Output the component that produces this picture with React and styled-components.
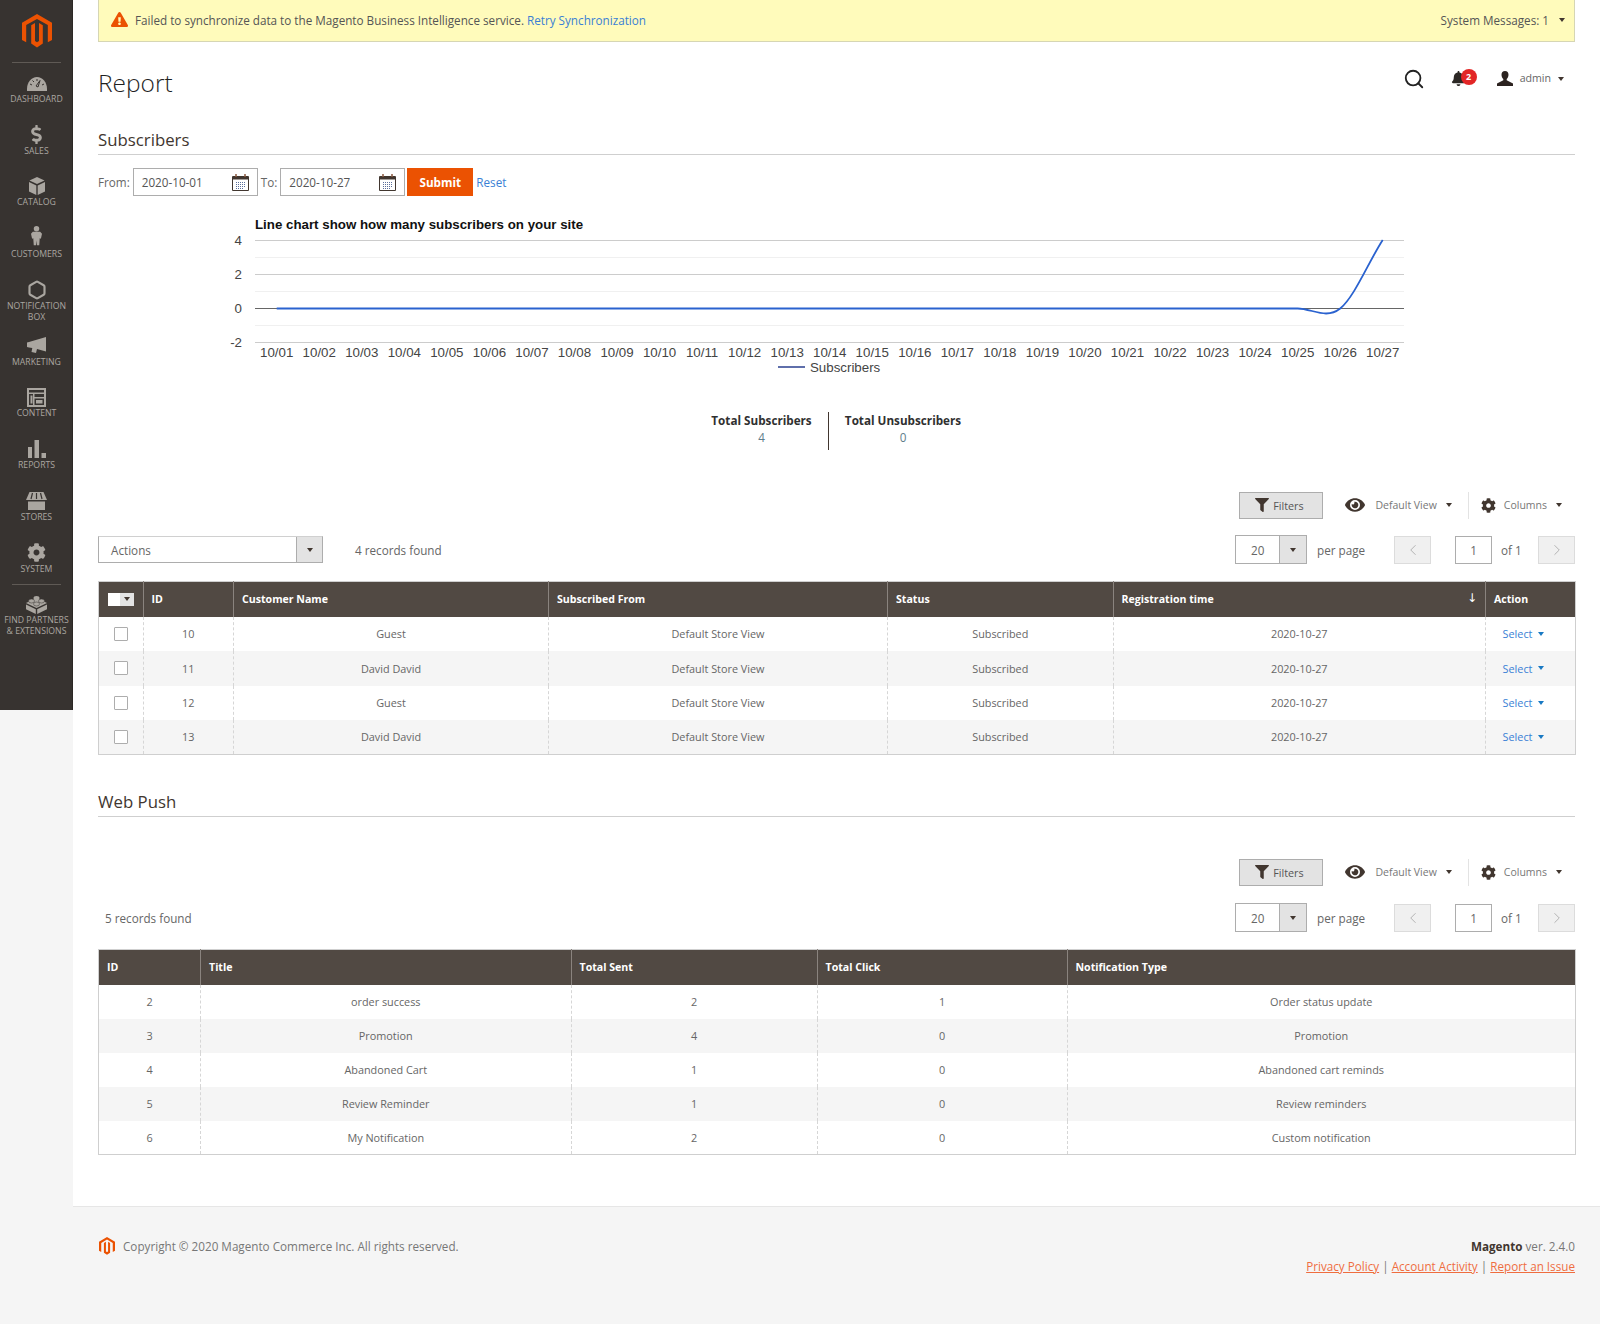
import React from "react";
import styled, { createGlobalStyle } from "styled-components";
import { FaBell, FaCog, FaDollarSign, FaExclamationTriangle, FaEye, FaFilter } from "react-icons/fa";
import { ChevronLeft, ChevronRight, Hexagon, Search } from "lucide-react";

const GlobalStyle = createGlobalStyle`
  html, body { margin: 0; padding: 0; background: #f5f5f5; }
  body { font-family: "Open Sans", "DejaVu Sans", sans-serif; color: #41362f; }
  * { box-sizing: border-box; }
  a { text-decoration: none; }
`;

const Page = styled.div`
  display: flex;
  align-items: flex-start;
  width: 1600px;
  min-height: 1324px;
`;

const Sidebar = styled.nav`
  width: 73px;
  height: 710px;
  flex: none;
  padding-left: 1px;
  background: #373330;
  border-right: 1px solid #2c2825;
`;

const LogoBox = styled.div`
  height: 63px;
  margin: 0 11px 9px;
  padding-top: 14px;
  display: flex;
  justify-content: center;
  border-bottom: 1px solid #5f5a55;
`;

const NavItem = styled.a`
  display: flex;
  flex-direction: column;
  align-items: center;
  height: ${(p) => p.$h || 51.7}px;
  padding-top: ${(p) => p.$top || 0}px;
  color: #aaa6a0;
  font-size: 8.7px;
  line-height: 11px;
  text-align: center;
  text-transform: uppercase;
  white-space: pre-line;
`;

const NavIcon = styled.span`
  height: 22px;
  margin-top: ${(p) => -(p.$up || 0)}px;
  margin-bottom: ${(p) => p.$up || 0}px;
  display: flex;
  align-items: center;
  justify-content: center;
  color: #aaa6a0;
`;

const NavDivider = styled.div`
  height: 1px;
  margin: 0 11px;
  background: #5f5a55;
`;

const Main = styled.div`
  flex: 1;
  min-width: 0;
`;

const Content = styled.main`
  background: #fff;
  height: 1207px;
  padding: 0 25px;
  border-bottom: 1px solid #e6e6e6;
`;

const MessageBar = styled.div`
  height: 42px;
  display: flex;
  align-items: center;
  justify-content: space-between;
  padding: 0 9px 2px 12px;
  background: #fffbbb;
  border: 1px solid #d6d6b4;
  border-top: 0;
  font-size: 11.7px;
  color: #555;
`;

const MessageText = styled.div`
  display: flex;
  align-items: center;
  gap: 7px;
  color: #eb5202;
  & > span { color: #555; }
`;

const SystemMessages = styled.span`
  display: flex;
  align-items: center;
`;

const TextLink = styled.a`
  color: #3a7fd5;
`;

const Caret = styled.span`
  display: inline-block;
  width: 0;
  height: 0;
  margin-left: ${(p) => p.$ml || 0}px;
  border-left: 3.5px solid transparent;
  border-right: 3.5px solid transparent;
  border-top: 4.5px solid ${(p) => p.$color || "#41362f"};
`;

const PageHeader = styled.header`
  height: 83px;
  display: flex;
  align-items: center;
  justify-content: space-between;
  padding-right: 11px;
  padding-bottom: 2px;
`;

const PageTitle = styled.h1`
  margin: 0;
  font-size: 24.5px;
  font-weight: 300;
  color: #1f1f1f;
`;

const HeaderActions = styled.div`
  display: flex;
  align-items: center;
  color: #222;
  padding-bottom: 8px;
`;

const Bell = styled.span`
  position: relative;
  display: flex;
  margin: 0 31px 0 26px;
  color: #2c2825;
`;

const Badge = styled.span`
  position: absolute;
  left: 10px;
  top: -2px;
  width: 16px;
  height: 16px;
  border-radius: 50%;
  background: #e22626;
  color: #fff;
  font-size: 9px;
  font-weight: 700;
  line-height: 16px;
  text-align: center;
`;

const Admin = styled.span`
  margin: 0 0 2px 7px;
  font-size: 10.6px;
  color: #666;
`;

const SectionTitle = styled.h2`
  margin: 0;
  height: 30px;
  padding-top: 3px;
  border-bottom: 1px solid #cfcfcf;
  font-size: 16.8px;
  line-height: 24px;
  font-weight: 400;
  color: #41362f;
`;

const DateForm = styled.form`
  display: flex;
  align-items: center;
  height: 28px;
  margin-top: 13px;
  font-size: 11.7px;
  color: #666;
`;

const DateBox = styled.div`
  width: 125px;
  height: 28px;
  margin: 0 3px;
  padding: 0 8px;
  display: flex;
  align-items: center;
  justify-content: space-between;
  border: 1px solid #adadad;
  background: #fff;
  color: #555;
`;

const SubmitButton = styled.button`
  width: 66px;
  height: 28px;
  margin: 0 3px 0 -1px;
  padding: 0;
  border: 0;
  background: #eb5202;
  color: #fff;
  font: 700 11.7px "Open Sans", sans-serif;
`;

const Chart = styled.svg`
  display: block;
  width: 1600px;
  height: 188px;
  margin: 1px 0 0 -98px;
`;

const Stats = styled.div`
  display: flex;
  justify-content: center;
  margin-top: 27px;
`;

const Stat = styled.div`
  width: ${(p) => p.$w}px;
  height: 38px;
  text-align: center;
  font-size: 11.7px;
  line-height: 17px;
  color: #607d8b;
  border-left: ${(p) => (p.$line ? "1px solid #41362f" : "0")};
  & > strong { display: block; color: #303030; font-weight: 700; }
`;

const FilterRow = styled.div`
  display: flex;
  align-items: center;
  justify-content: flex-end;
  height: 28px;
  margin-top: ${(p) => p.$mt}px;
  padding-right: 13px;
  font-size: 10.5px;
  color: #666;
`;

const FilterButton = styled.button`
  width: 84px;
  height: 27px;
  display: flex;
  align-items: center;
  justify-content: center;
  gap: 4px;
  padding: 0 4px 0 0;
  border: 1px solid #adadad;
  background: #e3e3e3;
  color: #555;
  font: 400 10.8px "Open Sans", sans-serif;
  & > svg { color: #41362f; }
`;

const ViewSwitch = styled.span`
  display: flex;
  align-items: center;
  color: #41362f;
  margin-left: ${(p) => p.$ml}px;
  & > em { margin-left: ${(p) => p.$gap}px; font-style: normal; color: #777; }
`;

const RowDivider = styled.span`
  width: 1px;
  height: 27px;
  margin: 0 12px 0 16px;
  background: #e3e3e3;
`;

const PagerRow = styled.div`
  display: flex;
  align-items: center;
  justify-content: space-between;
  height: 29px;
  margin-top: ${(p) => p.$mt}px;
  font-size: 11.7px;
  color: #666;
`;

const PagerLeft = styled.div`
  display: flex;
  align-items: center;
  padding-left: ${(p) => p.$pad || 0}px;
`;

const ActionsSelect = styled.div`
  width: 225px;
  height: 27px;
  display: flex;
  align-items: center;
  justify-content: space-between;
  margin-right: 32px;
  padding-left: 12px;
  border: 1px solid #adadad;
  border-top-color: #d0d0d0;
  color: #666;
`;

const DropButton = styled.span`
  width: ${(p) => p.$w}px;
  align-self: stretch;
  display: flex;
  align-items: center;
  justify-content: center;
  background: #e3e3e3;
  border-left: 1px solid #adadad;
`;

const PagerRight = styled.div`
  display: flex;
  align-items: center;
`;

const PerPageSelect = styled.div`
  width: 72px;
  height: 29px;
  display: flex;
  align-items: center;
  padding-left: 15px;
  justify-content: space-between;
  margin-right: 10px;
  border: 1px solid #adadad;
  color: #666;
`;

const PerPageLabel = styled.span`
  width: 77px;
`;

const PageArrow = styled.span`
  width: 37px;
  height: 28px;
  display: flex;
  align-items: center;
  justify-content: center;
  background: #f0f0f0;
  border: 1px solid #dcdcdc;
  color: #adadad;
`;

const PageInput = styled.span`
  width: 37px;
  height: 28px;
  margin: 0 9px 0 24px;
  display: flex;
  align-items: center;
  justify-content: center;
  border: 1px solid #adadad;
  color: #666;
`;

const OfLabel = styled.span`
  width: 37px;
`;

const Table = styled.table`
  width: 100%;
  margin-top: 17px;
  table-layout: fixed;
  border-collapse: collapse;
  border: 1px solid #cfcfcf;
  font-size: 10.85px;
  color: #666;
`;

const Col = styled.col`
  width: ${(p) => p.$w}px;
`;

const Th = styled.th`
  position: relative;
  height: 35px;
  padding: 0 8px;
  background: #514943;
  border-left: 1px solid #8a837e;
  color: #fff;
  font-size: 10.6px;
  font-weight: 700;
  text-align: left;
  &:first-child { border-left: 0; }
`;

const SortArrow = styled.span`
  position: absolute;
  right: 8px;
  top: 9px;
  font-weight: 400;
  font-size: 12px;
  line-height: 14px;
`;

const Tr = styled.tr`
  height: ${(p) => p.$h || 34}px;
  background: ${(p) => (p.$alt ? "#f5f5f5" : "#fff")};
`;

const Td = styled.td`
  padding: 0 9px;
  text-align: center;
  border-left: 1px dashed #d6d6d6;
  color: #666;
  &:first-child { border-left: 0; }
`;

const ActionTd = styled(Td)`
  padding-right: 23px;
`;

const MassSelect = styled.div`
  width: 26px;
  height: 13px;
  margin-left: 1px;
  display: flex;
  background: #fff;
`;

const MassDrop = styled.span`
  flex: 1;
  margin-left: 12px;
  display: flex;
  align-items: center;
  justify-content: center;
  background: #e3e3e3;
`;

const Check = styled.span`
  display: block;
  width: 14px;
  height: 14px;
  margin: 0 auto 0 5.5px;
  background: #fff;
  border: 1px solid #adadad;
  border-radius: 1px;
`;

const SelectLink = styled.a`
  display: inline-flex;
  align-items: center;
  gap: 6px;
  color: #3a7fd5;
`;

const WebPushTitle = styled(SectionTitle)`
  margin-top: 32px;
`;

const Footer = styled.footer`
  display: flex;
  justify-content: space-between;
  padding: 30px 25px 0;
  font-size: 11.7px;
  color: #777;
`;

const Copyright = styled.div`
  display: flex;
  align-items: center;
  gap: 8px;
  height: 18px;
  padding-left: 1px;
`;

const FooterRight = styled.div`
  text-align: right;
  line-height: 20px;
  margin-top: -1px;
  & > strong { color: #41362f; }
`;

const FooterLink = styled.a`
  color: #ef6d3f;
  text-decoration: underline;
`;

const MagentoLogo = ({ size = 30, color = "#eb5202" }) => (
  <svg width={size} height={(size * 34) / 30} viewBox="0 0 30 34" fill={color}>
    <path d="M15 0 30 8.7V25.9L25.8 28.3V11.1L15 4.9 4.2 11.1V28.3L0 25.9V8.7Z" />
    <path d="M9.2 11.3 13 9V27L15 28.2 17 27V9L20.8 11.3V29.6L15 33.4 9.2 29.6Z" />
  </svg>
);

const Gauge = () => (
  <svg width="20" height="15" viewBox="0 0 20 15" fill="currentColor">
    <path d="M0 13C0 6 4.500 1 10 1s10 5 10 12v2H0Z" />
    <path d="M9 10 13 4.500 11 11ZM3 8l2 1M5.500 4.500 7 6M10 3v2M17 8l-2 1" stroke="#373330" strokeWidth="1" />
  </svg>
);

const Cube = () => (
  <svg width="16" height="18" viewBox="0 0 16 18" fill="currentColor">
    <path d="M8 0 15.500 3.500 8 7 .5 3.500Z" />
    <path d="M0 5 7.300 8.500V18L0 14.500ZM16 5 8.700 8.500V18L16 14.500Z" />
  </svg>
);

const Person = () => (
  <svg width="11" height="21" viewBox="0 0 12 21" fill="currentColor">
    <circle cx="6" cy="3" r="3" />
    <path d="M2 6.500h8l2 2-1.200 5.500-1.300-.5L9 21H6.500L6 16l-.5 5H3l-.5-7.500-1.300.5L0 8.500Z" />
  </svg>
);

const Megaphone = () => (
  <svg width="20" height="17" viewBox="0 0 20 17" fill="currentColor">
    <path d="M0 5.500 2 5 19 0v14.500L10 12l-1 4-4.500-1 .8-4L2 10.500 0 10Z" />
  </svg>
);

const ContentIcon = () => (
  <svg width="19" height="19" viewBox="0 0 19 19">
    <path d="M0 0h19v19H0Z" fill="currentColor" />
    <path d="M2 2h15v2.500H2ZM2 6h4v11H2ZM7.500 6H17v3H7.500ZM7.500 10.500H17V17H7.500Z" fill="#373330" />
    <path d="M3.500 7.500h2v8h-2ZM9 12h6.500v3.500H9Z" fill="currentColor" />
  </svg>
);

const Bars = () => (
  <svg width="18" height="18" viewBox="0 0 18 18" fill="currentColor">
    <path d="M0 7h4v11H0ZM6.500 0h4.500v18H6.500ZM13.500 13H18v5h-4.500Z" />
  </svg>
);

const Store = () => (
  <svg width="21" height="18" viewBox="0 0 21 18" fill="currentColor">
    <path d="M3.500 0H17.500L21 8H0Z" />
    <path d="M2 9.500H19V18H2Z" />
    <path d="M6.500 1 5 7M10.500 1v6M14.500 1 16 7" stroke="#373330" strokeWidth="1.200" />
  </svg>
);

const Lego = () => (
  <svg width="21" height="19" viewBox="0 0 21 19" fill="currentColor">
    <path d="M10.500 3 21 8 10.500 13 0 8Z" />
    <path d="M0 9.500 9.800 14.300V19L0 14.200ZM21 9.500 11.200 14.300V19L21 14.200Z" />
    <ellipse cx="10.500" cy="3" rx="3" ry="2" />
    <ellipse cx="5.500" cy="6" rx="3" ry="2" stroke="#373330" strokeWidth=".5" />
    <ellipse cx="15.500" cy="6" rx="3" ry="2" stroke="#373330" strokeWidth=".5" />
    <ellipse cx="10.500" cy="9" rx="3" ry="2" stroke="#373330" strokeWidth=".5" />
  </svg>
);

const UserIcon = () => (
  <svg width="16" height="15" viewBox="0 0 16 15" fill="#2c2320">
    <path d="M8 0c2.300 0 3.500 1.700 3.500 3.700 0 1.700-.8 3.300-1.800 4.300v1.200L16 12.500V15H0v-2.500l6.300-3.300V8C5.300 7 4.500 5.400 4.500 3.700 4.500 1.700 5.700 0 8 0Z" />
  </svg>
);

const CalendarIcon = () => (
  <svg width="17" height="17" viewBox="0 0 17 17" fill="none">
    <path d="M.5 2.500h16v14H.5Z" stroke="#41362f" />
    <path d="M1 2.500h15v3H1Z" fill="#41362f" />
    <path d="M4 0v3M13 0v3" stroke="#8a5a40" strokeWidth="1.500" />
    <path d="M4 8.500h10M4 10.500h10M4 12.500h10M4 14.500h8" stroke="#5b6f9b" strokeDasharray="1 1" />
  </svg>
);

const NAV = [
  { label: "Dashboard", icon: <Gauge /> },
  { label: "Sales", icon: <FaDollarSign size={19} /> },
  { label: "Catalog", icon: <Cube /> },
  { label: "Customers", icon: <Person />, up: 3 },
  { label: "Notification\nBox", icon: <Hexagon size={20} strokeWidth={2.6} />, h: 56 },
  { label: "Marketing", icon: <Megaphone /> },
  { label: "Content", icon: <ContentIcon /> },
  { label: "Reports", icon: <Bars /> },
  { label: "Stores", icon: <Store /> },
  { label: "System", icon: <FaCog size={19} />, h: 42.5 },
];

const CHART_DAYS = Array.from({ length: 27 }, (_, i) => `10/${String(i + 1).padStart(2, "0")}`);

const SubscribersChart = () => {
  const x0 = 276.7;
  const step = 42.54;
  return (
    <Chart viewBox="0 197 1600 188">
      <text x="255" y="228.500" fontFamily="Liberation Sans" fontSize="13.3" fontWeight="700" fill="#111">
        Line chart show how many subscribers on your site
      </text>
      {[257, 291, 325].map((y) => (
        <line key={y} x1="255" x2="1404" y1={y + 0.5} y2={y + 0.5} stroke="#f0f0f0" />
      ))}
      {[240, 274, 342].map((y) => (
        <line key={y} x1="255" x2="1404" y1={y + 0.5} y2={y + 0.5} stroke="#ccc" />
      ))}
      <line x1="255" x2="1404" y1="308.500" y2="308.500" stroke="#666" />
      {[["4", 240], ["2", 274], ["0", 308], ["-2", 342]].map(([t, y]) => (
        <text key={t} x="242" y={y + 5} textAnchor="end" fontFamily="Liberation Sans" fontSize="13.3" fill="#444">
          {t}
        </text>
      ))}
      {CHART_DAYS.map((d, i) => (
        <text key={d} x={x0 + i * step} y="357" textAnchor="middle" fontFamily="Liberation Sans" fontSize="13.3" fill="#444">
          {d}
        </text>
      ))}
      <path
        d="M276.700 308.500H1297.700C1312 308.500 1326 319.700 1340.200 308.500C1354.400 297 1368.500 262 1382.700 240"
        fill="none"
        stroke="#2a62cf"
        strokeWidth="1.800"
      />
      <line x1="778" x2="805" y1="367" y2="367" stroke="#2a3f8f" strokeWidth="1.500" />
      <text x="810" y="372" fontFamily="Liberation Sans" fontSize="13.3" fill="#444">
        Subscribers
      </text>
    </Chart>
  );
};

const GridToolbar = ({ left, pad, pagerTop }) => (
  <>
    <FilterRow $mt={41}>
      <FilterButton>
        <FaFilter size={14} />
        Filters
      </FilterButton>
      <ViewSwitch $ml={22} $gap={10}>
        <FaEye size={20} />
        <em>Default View</em>
        <Caret $ml={9} />
      </ViewSwitch>
      <RowDivider />
      <ViewSwitch $ml={0} $gap={8}>
        <FaCog size={15} />
        <em>Columns</em>
        <Caret $ml={9} />
      </ViewSwitch>
    </FilterRow>
    <PagerRow $mt={pagerTop}>
      <PagerLeft $pad={pad}>{left}</PagerLeft>
      <PagerRight>
        <PerPageSelect>
          20
          <DropButton $w={27}>
            <Caret />
          </DropButton>
        </PerPageSelect>
        <PerPageLabel>per page</PerPageLabel>
        <PageArrow>
          <ChevronLeft size={18} strokeWidth={1.2} />
        </PageArrow>
        <PageInput>1</PageInput>
        <OfLabel>of 1</OfLabel>
        <PageArrow>
          <ChevronRight size={18} strokeWidth={1.2} />
        </PageArrow>
      </PagerRight>
    </PagerRow>
  </>
);

const SUBSCRIBERS = [
  ["10", "Guest"],
  ["11", "David David"],
  ["12", "Guest"],
  ["13", "David David"],
];

const PUSHES = [
  ["2", "order success", "2", "1", "Order status update"],
  ["3", "Promotion", "4", "0", "Promotion"],
  ["4", "Abandoned Cart", "1", "0", "Abandoned cart reminds"],
  ["5", "Review Reminder", "1", "0", "Review reminders"],
  ["6", "My Notification", "2", "0", "Custom notification"],
];

export default function App() {
  return (
    <>
      <GlobalStyle />
      <Page>
        <Sidebar>
          <LogoBox>
            <MagentoLogo />
          </LogoBox>
          {NAV.map(({ label, icon, h, up }) => (
            <NavItem key={label} $h={h}>
              <NavIcon $up={up}>{icon}</NavIcon>
              {label}
            </NavItem>
          ))}
          <NavDivider />
          <NavItem $top={8} $h={60}>
            <NavIcon>
              <Lego />
            </NavIcon>
            {"Find Partners\n& Extensions"}
          </NavItem>
        </Sidebar>
        <Main>
          <Content>
            <MessageBar>
              <MessageText>
                <FaExclamationTriangle size={17} />
                <span>
                  Failed to synchronize data to the Magento Business Intelligence service.{" "}
                  <TextLink>Retry Synchronization</TextLink>
                </span>
              </MessageText>
              <SystemMessages>
                System Messages: 1
                <Caret $ml={10} />
              </SystemMessages>
            </MessageBar>
            <PageHeader>
              <PageTitle>Report</PageTitle>
              <HeaderActions>
                <Search size={22} strokeWidth={2} />
                <Bell>
                  <FaBell size={15} />
                  <Badge>2</Badge>
                </Bell>
                <UserIcon />
                <Admin>admin</Admin>
                <Caret $ml={7} />
              </HeaderActions>
            </PageHeader>

            <SectionTitle>Subscribers</SectionTitle>
            <DateForm>
              From:
              <DateBox>
                2020-10-01
                <CalendarIcon />
              </DateBox>
              To:
              <DateBox>
                2020-10-27
                <CalendarIcon />
              </DateBox>
              <SubmitButton type="button">Submit</SubmitButton>
              <TextLink>Reset</TextLink>
            </DateForm>
            <SubscribersChart />
            <Stats>
              <Stat $w={132}>
                <strong>Total Subscribers</strong>4
              </Stat>
              <Stat $w={150} $line>
                <strong>Total Unsubscribers</strong>0
              </Stat>
            </Stats>

            <GridToolbar
              pagerTop={16}
              left={
                <>
                  <ActionsSelect>
                    Actions
                    <DropButton $w={26}>
                      <Caret />
                    </DropButton>
                  </ActionsSelect>
                  4 records found
                </>
              }
            />
            <Table>
              <colgroup>
                <Col $w={44.5} />
                <Col $w={90.5} />
                <Col $w={315} />
                <Col $w={339} />
                <Col $w={225.5} />
                <Col $w={372.5} />
                <Col $w={90} />
              </colgroup>
              <thead>
                <tr>
                  <Th>
                    <MassSelect>
                      <MassDrop>
                        <Caret />
                      </MassDrop>
                    </MassSelect>
                  </Th>
                  <Th>ID</Th>
                  <Th>Customer Name</Th>
                  <Th>Subscribed From</Th>
                  <Th>Status</Th>
                  <Th>
                    Registration time
                    <SortArrow>↓</SortArrow>
                  </Th>
                  <Th>Action</Th>
                </tr>
              </thead>
              <tbody>
                {SUBSCRIBERS.map(([id, name], i) => (
                  <Tr key={id} $alt={i % 2 === 1} $h={i % 2 ? 35 : 34}>
                    <Td>
                      <Check />
                    </Td>
                    <Td>{id}</Td>
                    <Td>{name}</Td>
                    <Td>Default Store View</Td>
                    <Td>Subscribed</Td>
                    <Td>2020-10-27</Td>
                    <ActionTd>
                      <SelectLink>
                        Select
                        <Caret $color="#1979c3" />
                      </SelectLink>
                    </ActionTd>
                  </Tr>
                ))}
              </tbody>
            </Table>

            <WebPushTitle>Web Push</WebPushTitle>
            <GridToolbar pagerTop={17} pad={7} left="5 records found" />
            <Table>
              <colgroup>
                <Col $w={102} />
                <Col $w={370.5} />
                <Col $w={246} />
                <Col $w={250} />
                <Col $w={508.5} />
              </colgroup>
              <thead>
                <tr>
                  <Th>ID</Th>
                  <Th>Title</Th>
                  <Th>Total Sent</Th>
                  <Th>Total Click</Th>
                  <Th>Notification Type</Th>
                </tr>
              </thead>
              <tbody>
                {PUSHES.map(([id, title, sent, click, type], i) => (
                  <Tr key={id} $alt={i % 2 === 1}>
                    <Td>{id}</Td>
                    <Td>{title}</Td>
                    <Td>{sent}</Td>
                    <Td>{click}</Td>
                    <Td>{type}</Td>
                  </Tr>
                ))}
              </tbody>
            </Table>
          </Content>
          <Footer>
            <Copyright>
              <MagentoLogo size={16} />
              Copyright © 2020 Magento Commerce Inc. All rights reserved.
            </Copyright>
            <FooterRight>
              <strong>Magento</strong> ver. 2.4.0
              <br />
              <FooterLink>Privacy Policy</FooterLink> | <FooterLink>Account Activity</FooterLink> |{" "}
              <FooterLink>Report an Issue</FooterLink>
            </FooterRight>
          </Footer>
        </Main>
      </Page>
    </>
  );
}
